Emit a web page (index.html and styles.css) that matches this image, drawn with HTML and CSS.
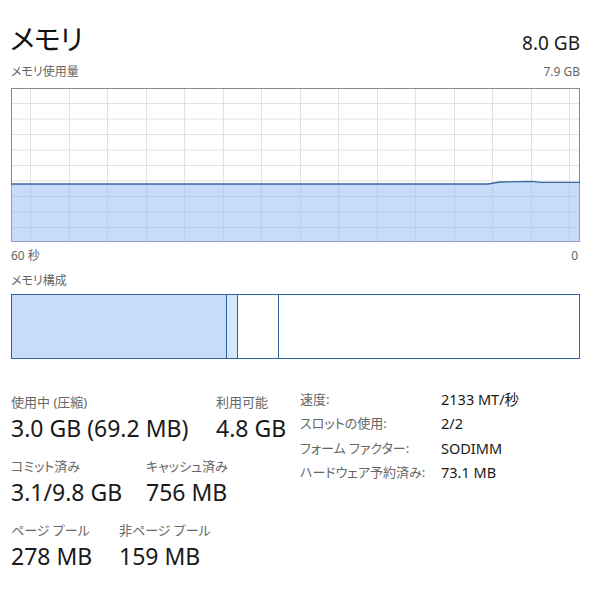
FILE: index.html
```html
<!DOCTYPE html>
<html lang="ja">
<head>
<meta charset="utf-8">
<title>メモリ</title>
<link rel="stylesheet" href="styles.css">
</head>
<body>
<div class="page">
  <div class="header">
    <div class="title">メモリ</div>
    <div class="total">8.0 GB</div>
  </div>
  <div class="caption-row">
    <span>メモリ使用量</span>
    <span>7.9 GB</span>
  </div>
  <div class="graph">
    <svg width="569" height="154" viewBox="0 0 569 154">
      <g class="grid">
        <line x1="0" y1="15.5" x2="569" y2="15.5"/>
        <line x1="0" y1="31" x2="569" y2="31"/>
        <line x1="0" y1="46.5" x2="569" y2="46.5"/>
        <line x1="0" y1="62" x2="569" y2="62"/>
        <line x1="0" y1="77.5" x2="569" y2="77.5"/>
        <line x1="0" y1="93" x2="569" y2="93"/>
        <line x1="0" y1="108.5" x2="569" y2="108.5"/>
        <line x1="0" y1="124" x2="569" y2="124"/>
        <line x1="0" y1="139.5" x2="569" y2="139.5"/>
        <line x1="19.5" y1="0" x2="19.5" y2="154"/>
        <line x1="58.5" y1="0" x2="58.5" y2="154"/>
        <line x1="96.5" y1="0" x2="96.5" y2="154"/>
        <line x1="135.5" y1="0" x2="135.5" y2="154"/>
        <line x1="173.5" y1="0" x2="173.5" y2="154"/>
        <line x1="212.5" y1="0" x2="212.5" y2="154"/>
        <line x1="250.5" y1="0" x2="250.5" y2="154"/>
        <line x1="289.5" y1="0" x2="289.5" y2="154"/>
        <line x1="327.5" y1="0" x2="327.5" y2="154"/>
        <line x1="366.5" y1="0" x2="366.5" y2="154"/>
        <line x1="404.5" y1="0" x2="404.5" y2="154"/>
        <line x1="443.5" y1="0" x2="443.5" y2="154"/>
        <line x1="481.5" y1="0" x2="481.5" y2="154"/>
        <line x1="520.5" y1="0" x2="520.5" y2="154"/>
        <line x1="558.5" y1="0" x2="558.5" y2="154"/>
      </g>
      <rect class="frame" x="0.5" y="0.5" width="568" height="153"/>
      <polygon class="area" points="0,96 477,96 489,94 521,93.3 530,94.3 569,94.3 569,154 0,154"/>
      <polyline class="curve" points="0,96 477,96 489,94 521,93.3 530,94.3 569,94.3"/>
    </svg>
  </div>
  <div class="axis-row">
    <span>60 秒</span>
    <span>0</span>
  </div>
  <div class="caption">メモリ構成</div>
  <div class="composition">
    <div class="seg seg-used" style="width:215px"></div>
    <div class="seg seg-modified" style="width:11px"></div>
    <div class="seg seg-standby" style="width:41px"></div>
    <div class="seg seg-free"></div>
  </div>
  <div class="stats">
    <div class="stats-left">
      <div class="stat-row">
        <div class="stat stat-wide">
          <div class="stat-label">使用中 (圧縮)</div>
          <div class="stat-value">3.0 GB (69.2 MB)</div>
        </div>
        <div class="stat">
          <div class="stat-label">利用可能</div>
          <div class="stat-value">4.8 GB</div>
        </div>
      </div>
      <div class="stat-row">
        <div class="stat stat-mid">
          <div class="stat-label">コミット済み</div>
          <div class="stat-value">3.1/9.8 GB</div>
        </div>
        <div class="stat">
          <div class="stat-label">キャッシュ済み</div>
          <div class="stat-value">756 MB</div>
        </div>
      </div>
      <div class="stat-row">
        <div class="stat stat-narrow">
          <div class="stat-label">ページ プール</div>
          <div class="stat-value">278 MB</div>
        </div>
        <div class="stat">
          <div class="stat-label">非ページ プール</div>
          <div class="stat-value">159 MB</div>
        </div>
      </div>
    </div>
    <div class="props">
      <div class="prop-label">速度:</div><div class="prop-value">2133 MT/秒</div>
      <div class="prop-label">スロットの使用:</div><div class="prop-value">2/2</div>
      <div class="prop-label">フォーム ファクター:</div><div class="prop-value">SODIMM</div>
      <div class="prop-label">ハードウェア予約済み:</div><div class="prop-value">73.1 MB</div>
    </div>
  </div>
</div>
</body>
</html>
```
FILE: styles.css
```css
html, body {
  margin: 0;
  padding: 0;
  background: #ffffff;
}

body {
  font-family: "Noto Sans", "Noto Sans CJK JP", sans-serif;
  font-feature-settings: "palt";
  color: #1a1a1a;
}

.page {
  width: 569px;
  padding: 19px 30px 0 11px;
}

.header {
  display: flex;
  justify-content: space-between;
  align-items: baseline;
  height: 42px;
}

.title {
  font-size: 28px;
  line-height: 40px;
  letter-spacing: -0.5px;
  margin-left: -1px;
  color: #111111;
}

.total {
  font-size: 19px;
  line-height: 24px;
  color: #1a1a1a;
}

.caption-row,
.axis-row {
  display: flex;
  justify-content: space-between;
  font-size: 12px;
  line-height: 16px;
  color: #666666;
}

.caption-row {
  height: 24px;
  padding-top: 3px;
}

.graph {
  height: 154px;
}

.graph svg {
  display: block;
}

.grid line {
  stroke: #e2e2e2;
  stroke-width: 1;
}

.frame {
  fill: none;
  stroke: #8a8a8a;
  stroke-width: 1;
}

.area {
  fill: #8ebaf2;
  fill-opacity: 0.5;
}

.curve {
  fill: none;
  stroke: #3a669e;
  stroke-width: 1.3;
}

.axis-row {
  margin-top: 6px;
  height: 18px;
}

.axis-row span:last-child {
  margin-right: 2px;
}

.caption {
  font-size: 12px;
  line-height: 16px;
  color: #666666;
  margin-top: 7px;
  height: 21px;
}

.composition {
  display: flex;
  height: 65px;
  box-sizing: border-box;
  border: 1px solid #2d62a3;
}

.seg {
  box-sizing: border-box;
  height: 100%;
  border-right: 1px solid #2d62a3;
}

.seg-used {
  background: #c6dcf8;
}

.seg-modified {
  background: #d6e6fb;
}

.seg-standby {
  background: #ffffff;
}

.seg-free {
  flex: 1;
  border-right: none;
  background: #ffffff;
}

.stats {
  display: flex;
  margin-top: 33px;
}

.stats-left {
  width: 289px;
  display: flex;
  flex-direction: column;
  gap: 13px;
}

.stat-row {
  display: flex;
}

.stat {
  display: flex;
  flex-direction: column;
}

.stat-wide {
  width: 205px;
}

.stat-mid {
  width: 135px;
}

.stat-narrow {
  width: 108px;
}

.stat-label {
  font-size: 13px;
  line-height: 21px;
  color: #666666;
}

.stat-value {
  font-size: 23px;
  line-height: 30px;
  color: #1a1a1a;
}

.props {
  display: grid;
  grid-template-columns: 141px auto;
  grid-auto-rows: 24.3px;
  margin-top: -3px;
  font-size: 13px;
  line-height: 20px;
}

.prop-label {
  color: #666666;
}

.prop-value {
  font-size: 14.5px;
  color: #1a1a1a;
}
```
